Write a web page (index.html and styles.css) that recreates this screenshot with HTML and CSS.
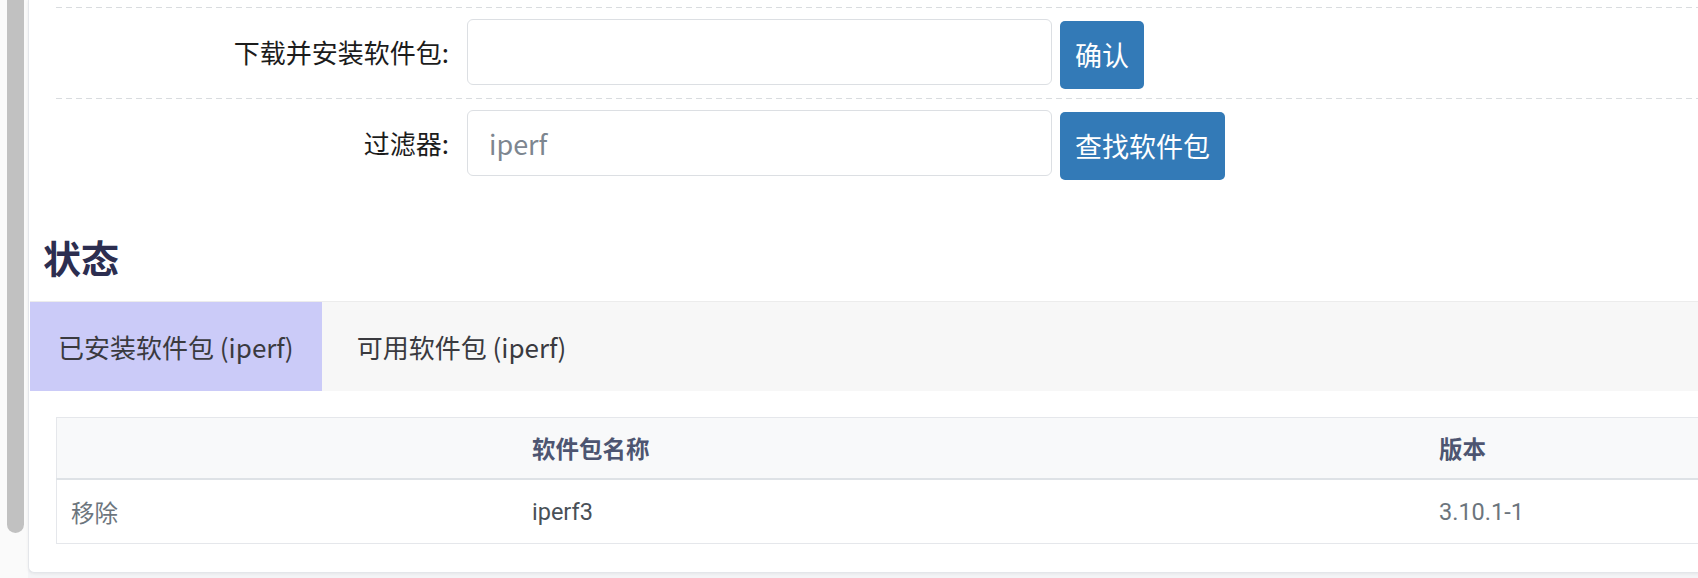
FILE: index.html
```html
<!DOCTYPE html>
<html lang="zh-CN">
<head>
<meta charset="utf-8">
<title>软件包</title>
<link rel="stylesheet" href="styles.css">
</head>
<body>
<div class="page">
  <div class="scrollbar"><div class="thumb"></div></div>
  <div class="card">
    <div class="form">
      <div class="row">
        <label class="label">下载并安装软件包:</label>
        <input class="input" type="text">
        <button class="btn">确认</button>
      </div>
      <div class="row">
        <label class="label">过滤器:</label>
        <input class="input" type="text" placeholder="iperf">
        <button class="btn">查找软件包</button>
      </div>
    </div>
    <h2 class="heading">状态</h2>
    <div class="tabs">
      <div class="tab active">已安装软件包 (iperf)</div>
      <div class="tab">可用软件包 (iperf)</div>
    </div>
    <table class="table">
      <thead>
        <tr><th class="c1"></th><th class="c2">软件包名称</th><th class="c3">版本</th></tr>
      </thead>
      <tbody>
        <tr><td class="c1 muted">移除</td><td class="c2 name">iperf3</td><td class="c3 muted">3.10.1-1</td></tr>
      </tbody>
    </table>
  </div>
</div>
</body>
</html>
```
FILE: styles.css
```css
html, body {
  margin: 0;
  padding: 0;
  overflow: hidden;
  width: 1698px;
  height: 578px;
  background: #f3f4f6;
  font-family: "Noto Sans CJK SC", "Noto Sans", sans-serif;
}
.page {
  display: flex;
  align-items: flex-start;
}
.scrollbar {
  flex: none;
  width: 28px;
  height: 578px;
  background: #fafafa;
}
.thumb {
  margin-left: 7px;
  width: 17px;
  height: 533px;
  background: #c1c1c1;
  border-radius: 0 0 9px 9px;
}
.card {
  flex: none;
  width: 1800px;
  background: #fff;
  border-left: 1px solid #e4e6ea;
  border-bottom: 1px solid #e4e6ea;
  border-radius: 0 0 0 6px;
  box-shadow: 0 1px 3px rgba(0,0,0,0.06);
  padding-bottom: 28px;
}
.form {
  margin-left: 27px;
  padding-top: 7px;
}
.row {
  display: flex;
  align-items: flex-start;
  padding: 12px 0 9px;
  background: repeating-linear-gradient(to right, #d9dcdf 0 6px, transparent 6px 10px) top left / 100% 1px no-repeat;
}
.label {
  width: 393px;
  margin-right: 18px;
  text-align: right;
  line-height: 66px;
  font-size: 26px;
  color: #1c1c1c;
}
.input {
  box-sizing: border-box;
  width: 585px;
  height: 66px;
  margin: 0 8px 0 0;
  border: 1px solid #dcdfe3;
  border-radius: 6px;
  padding: 0 21px;
  font-family: "Noto Sans CJK SC", sans-serif;
  font-size: 27px;
  color: #495057;
  outline: none;
}
.input::placeholder {
  color: #7d8690;
}
.btn {
  margin-top: 2px;
  height: 68px;
  padding: 0 15px;
  border: none;
  border-radius: 5px;
  background: #337ab7;
  color: #fff;
  font-family: "Noto Sans CJK SC", sans-serif;
  font-size: 27px;
  line-height: 68px;
}
.heading {
  margin: 46px 0 22px 14px;
  font-size: 38px;
  line-height: 44px;
  font-weight: 700;
  color: #2c2e50;
}
.tabs {
  display: flex;
  margin-left: 1px;
  height: 90px;
  background: #f7f7f7;
  border-top: 1px solid #ececec;
  box-sizing: border-box;
}
.tab {
  padding: 0 28px;
  line-height: 89px;
  font-size: 26px;
  color: #3a3a3f;
}
.tab.active {
  background: #cbcbf8;
  margin-right: 7px;
}
.table {
  margin: 26px 0 0 27px;
  width: 1740px;
  border-collapse: collapse;
  border: 1px solid #e5e7eb;
  font-family: Roboto, "Noto Sans CJK SC", sans-serif;
  font-size: 23.5px;
}
.table th {
  height: 60px;
  padding: 0 12px 0 14px;
  text-align: left;
  background: #f8f9fa;
  font-family: "Noto Sans CJK SC", sans-serif;
  font-weight: 700;
  color: #4d5571;
  border-bottom: 2px solid #dee2e6;
}
.table td {
  height: 63px;
  padding: 0 12px 0 14px;
}
.c1 { width: 435px; }
.c2 { width: 881px; }
.muted { color: #6c757d; }
.name { color: #495057; }
.table td.c1 { font-family: "Noto Sans CJK SC", sans-serif; }
```
